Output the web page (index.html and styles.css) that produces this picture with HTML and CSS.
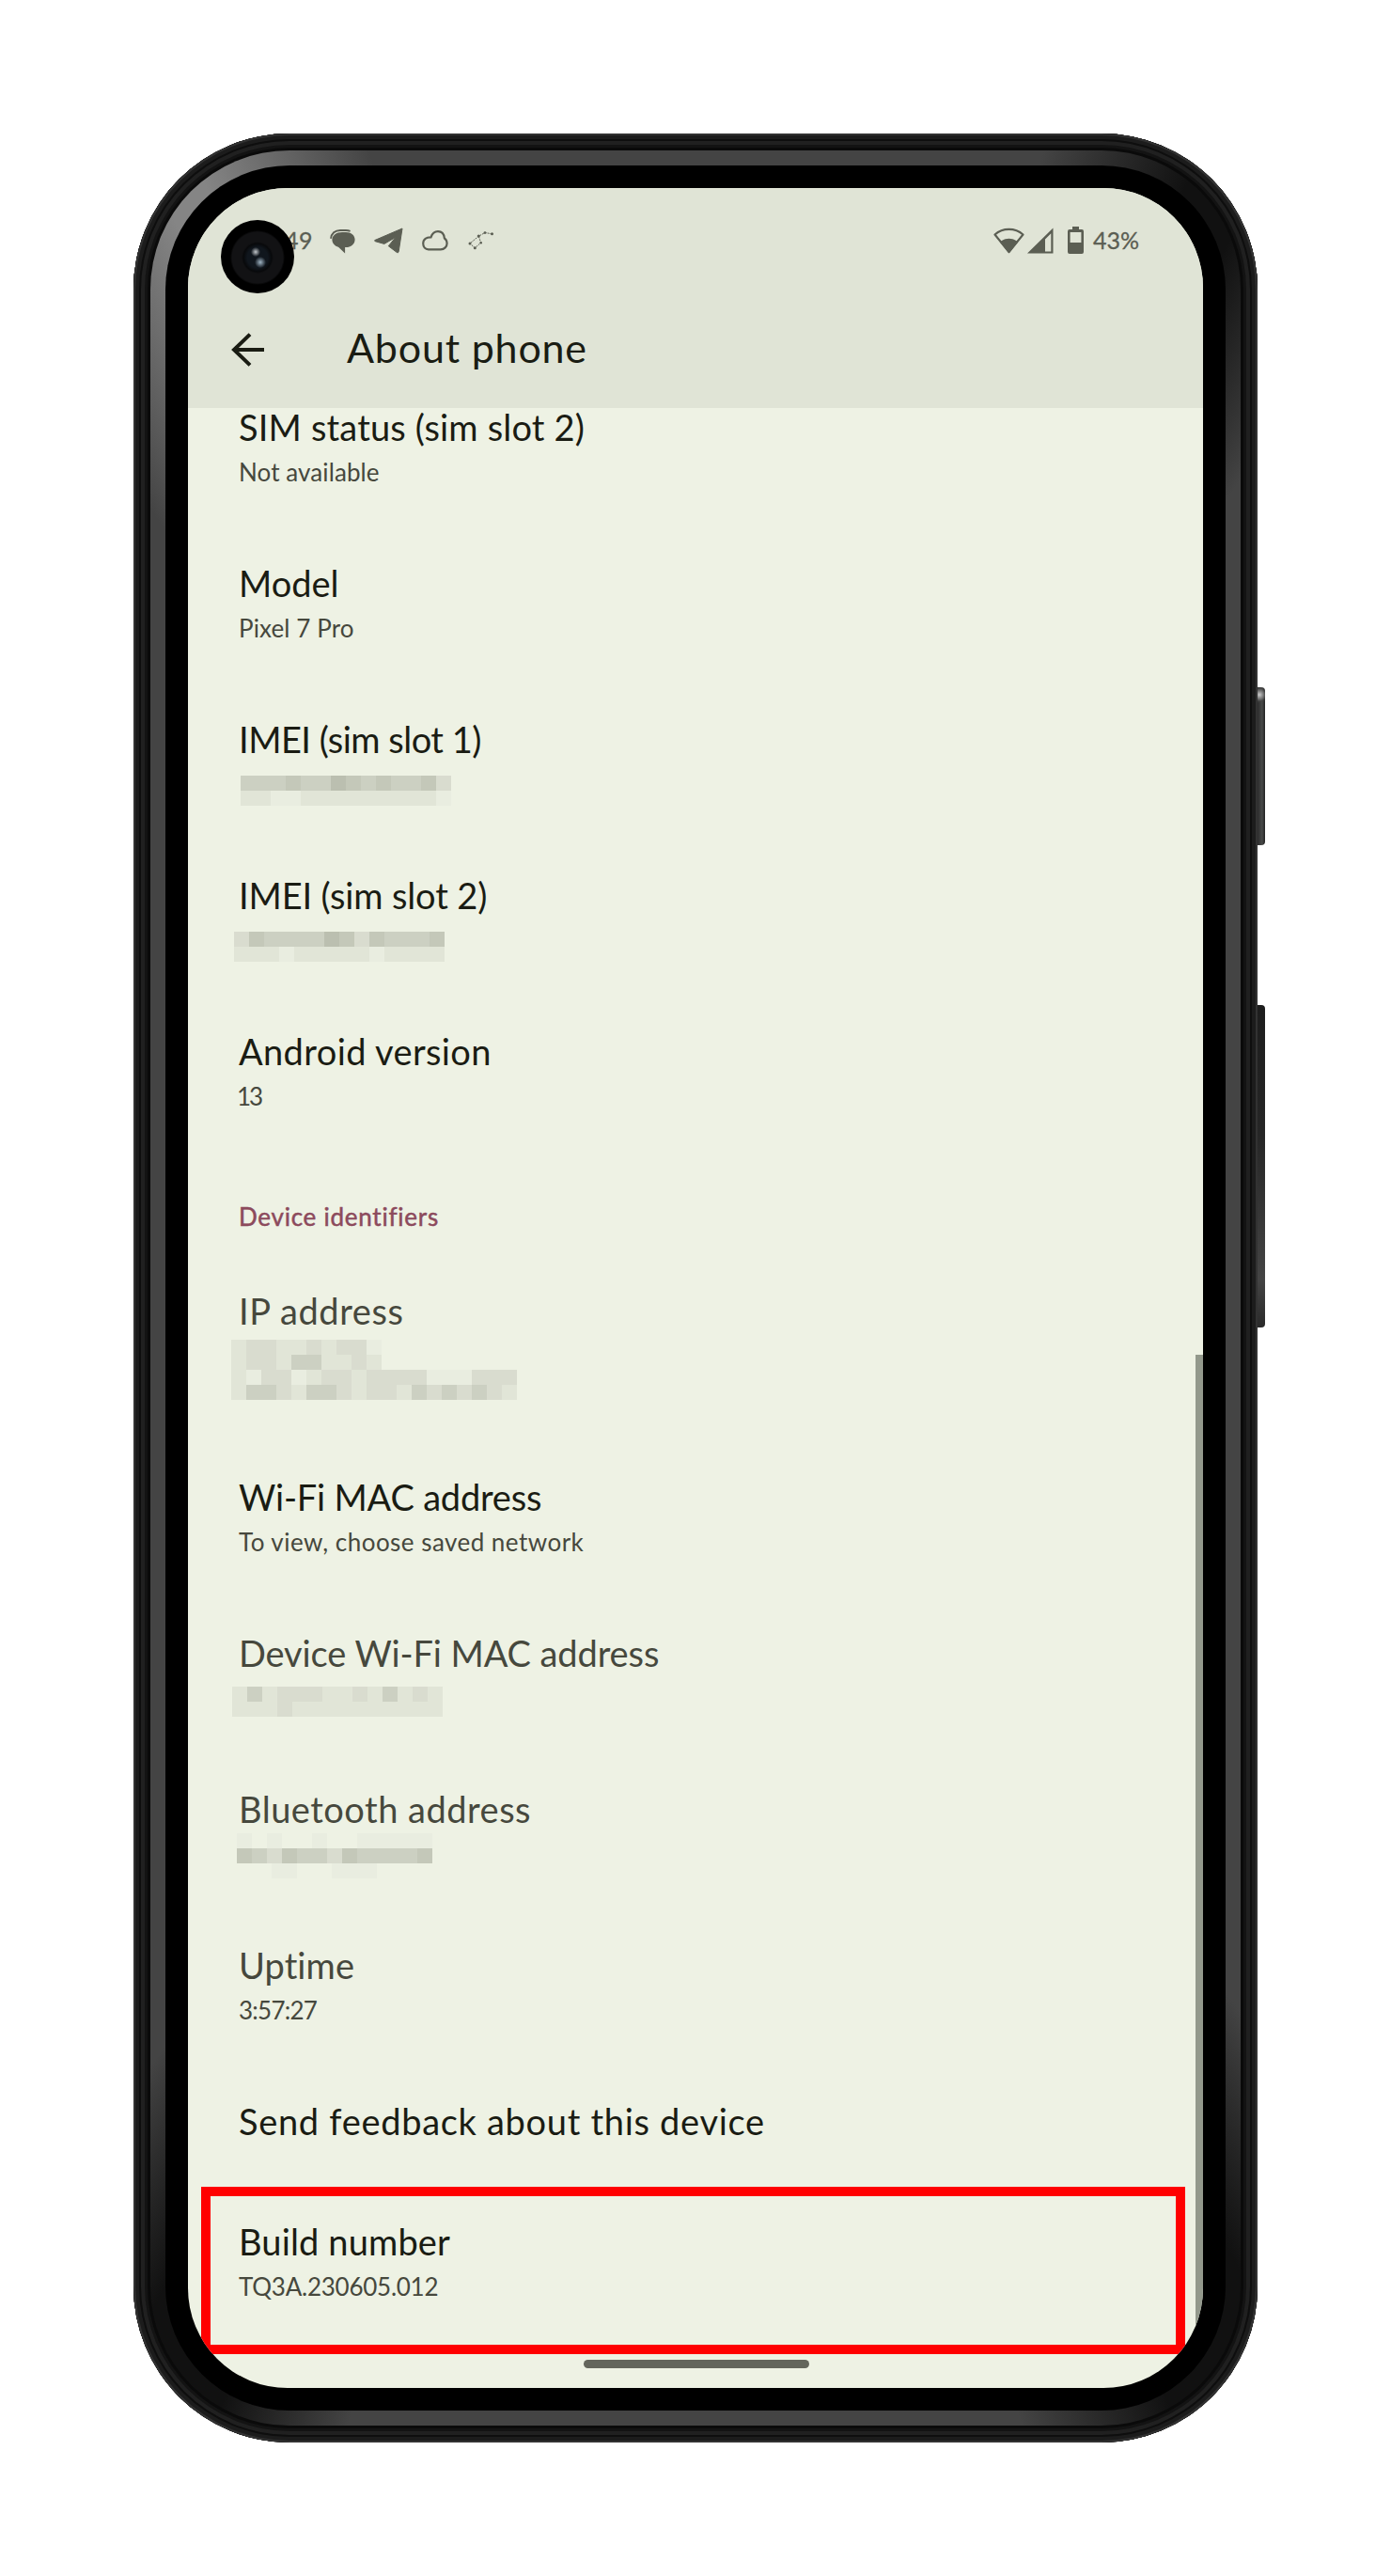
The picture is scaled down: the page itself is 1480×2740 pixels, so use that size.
FILE: index.html
```html
<!DOCTYPE html>
<html lang="en">
<head>
<meta charset="utf-8">
<title>About phone</title>
<link rel="stylesheet" href="styles.css">
</head>
<body>
<div class="phone">
  <span class="key key-power"></span>
  <span class="key key-volume"></span>
  <div class="rim"><div class="bezel"><main class="screen">
    <header class="header">
      <div class="status">
        <span class="clock">49</span>
        <svg class="ic-msg" width="28" height="30" viewBox="0 0 28 30"><g transform="translate(0 2)"><path fill="#5b5e53" d="M14 3.900h4c5.600 0 9.600 3.200 9.600 7.900 0 5-4.200 8.300-9.600 8.300h-.9v6.300l-6.800-6.500C6 18.700 3.400 15.600 3.400 12c0-4.700 4.400-8.100 10.600-8.100z"/><path fill="none" stroke="#5b5e53" stroke-width="2" d="M2.100 10.800C2.500 5.400 6.500 1.900 12 1.900h6c1.800 0 3.200.3 4.600.9"/></g></svg>
        <svg class="ic-plane" width="31" height="28" viewBox="0 0 31 28"><path fill="#5b5e53" stroke="#5b5e53" stroke-width="1" stroke-linejoin="round" d="M.8 13.500 30 1l-3.800 24.500c-.2 1.400-1.200 1.500-2.200.8l-8.700-6.600 7.500-9.200-12 6.900-9.500-2.700c-.9-.4-.9-.8-.5-1.200z"/></svg>
        <svg class="ic-cloud" width="28" height="22" viewBox="0 0 28 22"><path fill="none" stroke="#5b5e53" stroke-width="2.200" d="M6.800 20.300h13c4 0 6.800-2.900 6.800-6.500 0-2.500-1.100-4.200-2.700-5.300C23.400 4 20.800 1.200 17 1.200c-3.800 0-6 2-7.500 6.100-4.700-.2-8.300 2-8.300 6.500 0 4 2.400 6.500 5.600 6.500z"/></svg>
        <svg class="ic-stars" width="28" height="21" viewBox="0 0 28 21"><path fill="none" stroke="#5b5e53" stroke-width="1" stroke-dasharray="2 1" d="M25.500 2.800 18 1.500l-6.700 3.700L2 13l5.300 4.700 6.400-5.500-2.400-7"/><g fill="#5b5e53"><circle cx="25.500" cy="2.800" r="1.500"/><circle cx="18" cy="1.600" r="1.400"/><circle cx="11.300" cy="5" r="1.600"/><circle cx="2" cy="13" r="1.500"/><circle cx="13.700" cy="12.200" r="1.300"/><circle cx="7.300" cy="17.700" r="1.500"/></g></svg>
        <span class="spacer"></span>
        <svg class="ic-wifi" width="33" height="28" viewBox="0 0 33 28"><path fill="none" stroke="#5b5e53" stroke-width="2.200" stroke-linejoin="round" d="M16.500 26 1.500 7.500c8.500-7.400 21.500-7.400 30 0z"/><path fill="#5b5e53" d="M16.500 27.500 7 15.500c5.200-5 13.800-5 19 0z"/></svg>
        <svg class="ic-cell" width="28" height="28" viewBox="0 0 28 28"><path fill="#5b5e53" fill-rule="evenodd" d="M27.500.5v27H0zM19 12.500v13h6.300V6.200z"/></svg>
        <svg class="ic-batt" width="17" height="30" viewBox="0 0 17 30"><path fill="#5b5e53" fill-rule="evenodd" d="M5 0h7v3h3q2 0 2 2v22q0 2-2 2H2q-2 0-2-2V5q0-2 2-2h3zM2.600 6v11h11.800V6z"/></svg>
        <span class="percent">43%</span>
      </div>
      <div class="appbar">
        <svg class="back" width="36" height="36" viewBox="0 0 36 36"><path fill="none" stroke="#1a1c13" stroke-width="4" d="M35 18H3M20 1.600 3 18l17 16.400"/></svg>
        <h1>About phone</h1>
      </div>
    </header>
    <section class="list">
      <div class="row sim-status"><h2>SIM status (sim slot 2)</h2><p>Not available</p></div>
      <div class="row model"><h2>Model</h2><p>Pixel 7 Pro</p></div>
      <div class="row imei-1"><h2>IMEI (sim slot 1)</h2>
        <svg class="redacted" width="300" height="34"><g transform="translate(2 8) scale(16)">
          <path class="s3" d="M0 .5h13"/><path class="s4" d="M3 .5h1M7 .5h1M9 .5h1M12 .5h1"/><path class="s5" d="M6 .5h1"/><path class="s2" d="M13 .5h1"/>
          <path class="s1" d="M0 1.500h2M4 1.500h9"/><path class="s0" d="M2 1.500h2M13 1.500h1"/>
        </g></svg></div>
      <div class="row imei-2"><h2>IMEI (sim slot 2)</h2>
        <svg class="redacted" width="300" height="34"><g transform="translate(-5 8) scale(16)">
          <path class="s3" d="M0 .5h14"/><path class="s2" d="M0 .5h1M8 .5h1"/><path class="s4" d="M1 .5h1M7 .5h1M9 .5h1M13 .5h1"/><path class="s5" d="M6 .5h1"/>
          <path class="s1" d="M0 1.500h3M4 1.500h5M10 1.500h4"/><path class="s0" d="M3 1.500h1M9 1.500h1"/>
        </g></svg></div>
      <div class="row version"><h2>Android version</h2><p>13</p></div>
      <h3>Device identifiers</h3>
      <div class="row tall dim ip"><h2>IP address</h2>
        <svg class="redacted" width="300" height="64"><g transform="translate(-8 0) scale(16)">
          <path class="s1" d="M0 .5h10M0 1.500h10M0 2.500h19M0 3.500h19"/>
          <path class="s0" d="M9 .5h1M1 2.500h1M4 2.500h1M13 2.500h3"/>
          <path class="s2" d="M1 .5h2M5 .5h1M7 .5h2M1 1.500h2M8 1.500h1M2 2.500h2M6 2.500h2M9 2.500h4M16 2.500h3M3 3.500h1M7 3.500h1M9 3.500h2M13 3.500h1M15 3.500h1M17 3.500h1"/>
          <path class="s3" d="M4 1.500h2M1 3.500h2M5 3.500h2M12 3.500h1M14 3.500h1M16 3.500h1"/>
        </g></svg></div>
      <div class="row wifi-mac"><h2>Wi-Fi MAC address</h2><p>To view, choose saved network</p></div>
      <div class="row dim device-mac"><h2>Device Wi-Fi MAC address</h2>
        <svg class="redacted" width="300" height="34"><g transform="translate(-7 5) scale(16)">
          <path class="s1" d="M0 .5h14M0 1.500h14"/><path class="s2" d="M1 .5h1M3 .5h3M8 .5h1M12 .5h1M3 1.500h1"/><path class="s3" d="M10 .5h1M1 .5h1"/>
        </g></svg></div>
      <div class="row dim bluetooth"><h2>Bluetooth address</h2>
        <svg class="redacted" width="300" height="34"><g transform="translate(-2 -5) scale(16)">
          <path class="s0" d="M0 .5h1M2 .5h1M5 .5h1M8 .5h5M2.300 2.500h1.700M6.300 2.500h3"/>
          <path class="s3" d="M0 1.500h13"/><path class="s2" d="M2 1.500h1M6 1.500h1"/><path class="s4" d="M0 1.500h1M3 1.500h1M7 1.500h1M12 1.500h1"/>
        </g></svg></div>
      <div class="row dim uptime"><h2>Uptime</h2><p>3:57:27</p></div>
      <div class="row short feedback"><h2>Send feedback about this device</h2></div>
      <div class="row build"><h2>Build number</h2><p>TQ3A.230605.012</p></div>
    </section>
    <span class="scrollbar"></span>
    <span class="highlight"></span>
    <span class="home"></span>
    <span class="camera"></span>
  </main></div></div>
</div>
</body>
</html>
```
FILE: styles.css
```css
* { box-sizing: border-box; }
body { margin: 0; padding: 142px; background: #fff; font-family: Lato, Roboto, sans-serif; color: #1a1c13; }
h1, h2, h3, p { margin: 0; font-weight: 400; white-space: nowrap; }
svg { display: block; flex: none; }

.phone {
  position: relative; width: 1196px; height: 2456px; padding: 18px; border-radius: 166px;
  background: #0a0a0a;
  box-shadow: inset 0 0 0 2px #323232, inset 0 0 0 6px #1c1c1c, inset 0 0 0 8px #0e0e0e, inset 0 0 0 12px #202020, inset 0 0 0 15px #131313;
}
.rim {
  height: 100%; padding: 16px; border-radius: 148px;
  background: conic-gradient(#444 0deg 17deg, #111 24deg 27deg, #444 34deg 143deg, #111 151deg 157deg, #444 164deg 197deg, #111 203deg 208deg, #444 215deg 325deg, #858585 334deg 336deg, #444 344deg);
}
.bezel { height: 100%; padding: 24px; border-radius: 132px; background: #000; }
.screen { position: relative; height: 100%; overflow: hidden; border-radius: 106px; background: #eef2e4; }

.key { position: absolute; left: 1196px; width: 8px; border-radius: 0 4px 4px 0; }
.key-power { top: 589px; height: 168px; background: radial-gradient(circle at 2px 8px, #ccc 0, #4448 7px, transparent 9px), linear-gradient(90deg, #2c2c2c, #484a49 60%, #222); }
.key-volume { top: 927px; height: 343px; background: linear-gradient(#1d1d1d, #262626 40%, #444 85%, #2a2a2a); }

.header { height: 234px; background: #e0e4d6; }
.status { display: flex; align-items: center; height: 112px; padding: 0 68px 0 103px; font-size: 25px; color: #5b5e53; }
.clock, .percent { padding-bottom: 2px; -webkit-text-stroke: .3px #5b5e53; }
.clock { letter-spacing: .5px; }
.spacer { flex: 1; }
.ic-msg { margin-left: 17px; }
.ic-plane { margin-left: 20px; }
.ic-cloud { margin-left: 20px; }
.ic-stars { margin-left: 21px; }
.ic-cell { margin-left: 3px; }
.ic-batt { margin: 0 10px 0 15px; }
.appbar { display: flex; align-items: center; height: 122px; padding: 0 0 2px 46px; }
.appbar h1 { margin-left: 87px; padding-bottom: 4px; font-size: 43px; line-height: 50px; letter-spacing: .8px; }

.list { margin-top: -5px; padding-left: 54px; }
.row { height: 166px; }
.row.tall { height: 198px; }
.row.short { height: 128px; }
.row h2 { font-size: 38px; line-height: 50px; }
.row p { margin-top: 6px; font-size: 26px; line-height: 34px; color: #46483d; }
.dim h2 { color: #46483d; }
.list h3 { height: 110px; padding-top: 18px; font-size: 26px; line-height: 34px; letter-spacing: .75px; color: #8c4a5c; -webkit-text-stroke: .5px #8c4a5c; }

.sim-status h2 { letter-spacing: .17px; }
.sim-status p, .model p { letter-spacing: .1px; }
.imei-1 h2 { letter-spacing: -.5px; }
.imei-2 h2 { letter-spacing: -.13px; }
.version h2 { letter-spacing: .38px; }
.version p { margin-left: -2px; letter-spacing: -2px; }
.ip h2 { letter-spacing: .6px; }
.wifi-mac h2 { letter-spacing: -.2px; }
.wifi-mac p { letter-spacing: .47px; }
.device-mac h2 { letter-spacing: -.1px; }
.bluetooth h2 { letter-spacing: .5px; }
.uptime h2 { letter-spacing: .1px; }
.uptime p { letter-spacing: -.75px; }
.feedback h2 { letter-spacing: .7px; }
.build h2 { letter-spacing: .15px; }
.build p { letter-spacing: -.25px; }

.redacted { margin-top: 6px; overflow: visible; shape-rendering: crispEdges; }
.s0 { stroke: #e9ede0; }
.s1 { stroke: #e1e5d7; }
.s2 { stroke: #d9dccf; }
.s3 { stroke: #ccd0c2; }
.s4 { stroke: #c4c8b9; }
.s5 { stroke: #bbbfb0; }

.scrollbar { position: absolute; right: 0; top: 1241px; bottom: 0; width: 8px; background: #93998c; }
.highlight { position: absolute; left: 14px; top: 2126px; width: 1047px; height: 178px; border: 10px solid #f00; }
.home { position: absolute; left: 421px; top: 2310px; width: 240px; height: 9px; border-radius: 5px; background: #64665c; }
.camera {
  position: absolute; left: 35px; top: 34px; width: 78px; height: 78px; border-radius: 50%;
  background: radial-gradient(circle at 37px 34px, #c4c8cc 0, transparent 5px), radial-gradient(circle at 42px 45px, #9fb4c4 0, transparent 6px), radial-gradient(circle at 39px 40px, #10161d 0 11px, #08090b 15px, #121214 17px 27px, #000 29px);
}
```
